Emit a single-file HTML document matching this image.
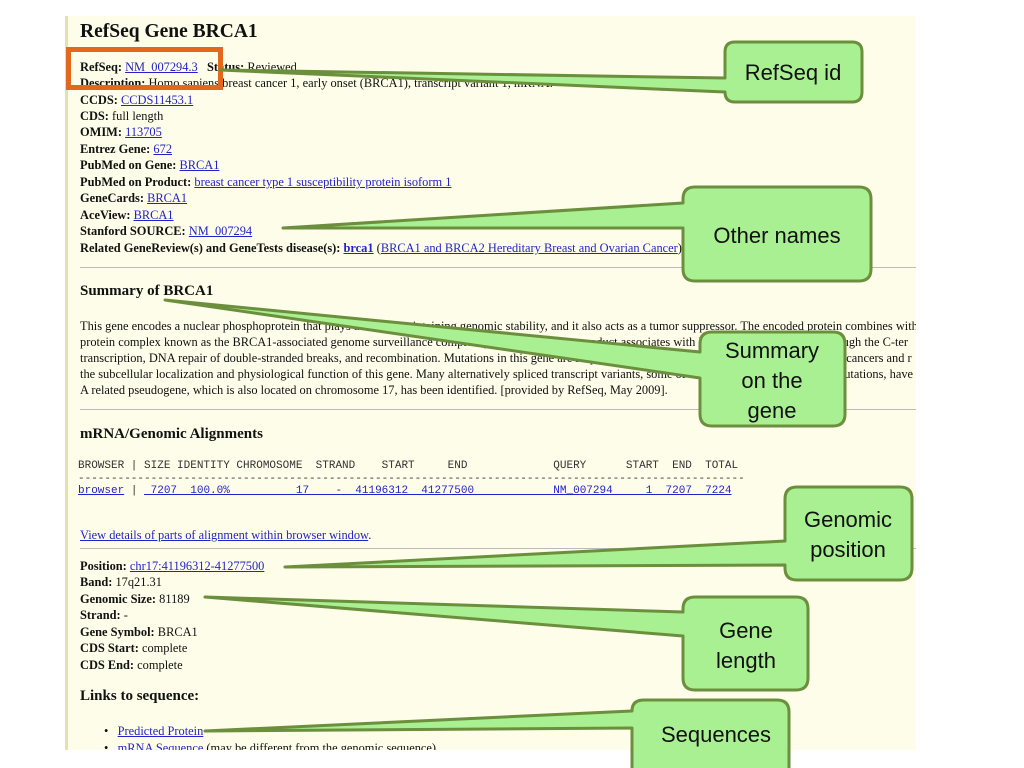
<!DOCTYPE html>
<html><head><meta charset="utf-8"><style>
body{margin:0;width:1024px;height:768px;background:#fff;position:relative;overflow:hidden;font-family:"Liberation Serif",serif;color:#111}
#pg{position:absolute;left:65px;top:16px;width:848px;height:734px;background:#fefde9;border-left:3px solid #e6dfb0;overflow:hidden}
.l{position:absolute;left:12px;font-size:12.4px;white-space:nowrap;line-height:14px}
.l b{font-weight:bold}
a{color:#2323c8;text-decoration:underline}
h1,h2,h3{position:absolute;left:12px;margin:0;white-space:nowrap}
h1{font-size:19.5px;top:5px}
h2{font-size:15px}
hr{position:absolute;left:12px;width:840px;margin:0;border:0;border-top:1px solid #bbb;height:0}
.m{position:absolute;left:10px;font-family:"Liberation Mono",monospace;font-size:11px;white-space:pre;color:#333;line-height:12.5px}
.p{position:absolute;left:12px;top:302px;font-size:12.4px;line-height:16px;white-space:nowrap}
svg{position:absolute;left:0;top:0}
.c{font-family:"Liberation Sans","DejaVu Sans",sans-serif;font-size:22px;fill:#111}
</style></head><body>
<div id="pg">
<h1>RefSeq Gene BRCA1</h1>
<div class="l" style="top:44px"><b>RefSeq:</b> <a>NM_007294.3</a> &nbsp; <b>Status:</b> Reviewed</div>
<div class="l" style="top:60px"><b>Description:</b> Homo sapiens breast cancer 1, early onset (BRCA1), transcript variant 1, mRNA.</div>
<div class="l" style="top:77px"><b>CCDS:</b> <a>CCDS11453.1</a></div>
<div class="l" style="top:93px"><b>CDS:</b> full length</div>
<div class="l" style="top:109px"><b>OMIM:</b> <a>113705</a></div>
<div class="l" style="top:126px"><b>Entrez Gene:</b> <a>672</a></div>
<div class="l" style="top:142px"><b>PubMed on Gene:</b> <a>BRCA1</a></div>
<div class="l" style="top:159px"><b>PubMed on Product:</b> <a>breast cancer type 1 susceptibility protein isoform 1</a></div>
<div class="l" style="top:175px"><b>GeneCards:</b> <a>BRCA1</a></div>
<div class="l" style="top:192px"><b>AceView:</b> <a>BRCA1</a></div>
<div class="l" style="top:208px"><b>Stanford SOURCE:</b> <a>NM_007294</a></div>
<div class="l" style="top:225px"><b>Related GeneReview(s) and GeneTests disease(s):</b> <a><b>brca1</b></a> (<a>BRCA1 and BRCA2 Hereditary Breast and Ovarian Cancer</a>)</div>
<hr style="top:251px">
<h2 style="top:267px">Summary of BRCA1</h2>
<div class="p">This gene encodes a nuclear phosphoprotein that plays a role in maintaining genomic stability, and it also acts as a tumor suppressor. The encoded protein combines with<br>protein complex known as the BRCA1-associated genome surveillance complex (BASC). This gene product associates with RNA polymerase II, and through the C-ter<br>transcription, DNA repair of double-stranded breaks, and recombination. Mutations in this gene are responsible for approximately 40% of inherited breast cancers and r<br>the subcellular localization and physiological function of this gene. Many alternatively spliced transcript variants, some of which are disease-associated mutations, have be<br>A related pseudogene, which is also located on chromosome 17, has been identified. [provided by RefSeq, May 2009].</div>
<hr style="top:393px">
<h2 style="top:410px">mRNA/Genomic Alignments</h2>
<div class="m" style="top:444px">BROWSER | SIZE IDENTITY CHROMOSOME  STRAND    START     END             QUERY      START  END  TOTAL
-----------------------------------------------------------------------------------------------------
<a>browser</a> | <a> 7207  100.0%          17    -  41196312  41277500            NM_007294     1  7207  7224</a></div>
<div class="l" style="top:512px"><a>View details of parts of alignment within browser window</a>.</div>
<hr style="top:532px">
<div class="l" style="top:543px"><b>Position:</b> <a>chr17:41196312-41277500</a></div>
<div class="l" style="top:559px"><b>Band:</b> 17q21.31</div>
<div class="l" style="top:576px"><b>Genomic Size:</b> 81189</div>
<div class="l" style="top:592px"><b>Strand:</b> -</div>
<div class="l" style="top:609px"><b>Gene Symbol:</b> BRCA1</div>
<div class="l" style="top:625px"><b>CDS Start:</b> complete</div>
<div class="l" style="top:642px"><b>CDS End:</b> complete</div>
<h2 style="top:672px">Links to sequence:</h2>
<div class="l" style="top:708px;left:36px">•&nbsp;&nbsp; <a>Predicted Protein</a></div>
<div class="l" style="top:725px;left:36px">•&nbsp;&nbsp; <a>mRNA Sequence</a> (may be different from the genomic sequence)</div>
</div>
<svg width="1024" height="768">
<rect x="68.5" y="49.5" width="152" height="38" fill="none" stroke="#e2691c" stroke-width="5"/>
<g fill="#a8f092" stroke="#6b8f3d" stroke-width="3" stroke-linejoin="round">
<path d="M735,42 H852 Q862,42 862,52 V92 Q862,102 852,102 H735 Q725,102 725,92 V92 L220,70 L725,78 V52 Q725,42 735,42 Z"/>
<path d="M695,187 H859 Q871,187 871,199 V269 Q871,281 859,281 H695 Q683,281 683,269 V228 L283,228 L683,203 V199 Q683,187 695,187 Z"/>
<path d="M712,332 H833 Q845,332 845,344 V414 Q845,426 833,426 H712 Q700,426 700,414 V378 L165,300 L700,352 V344 Q700,332 712,332 Z"/>
<path d="M797,487 H900 Q912,487 912,499 V568 Q912,580 900,580 H797 Q785,580 785,568 V565 L285,567 L785,541 V499 Q785,487 797,487 Z"/>
<path d="M695,597 H796 Q808,597 808,609 V678 Q808,690 796,690 H695 Q683,690 683,678 V636 L205,597 L683,612 V609 Q683,597 695,597 Z"/>
<path d="M644,700 H777 Q789,700 789,712 V780 H632 V728 L205,731 L632,711 Q632,700 644,700 Z"/>
</g>
<g class="c" text-anchor="middle">
<text x="793" y="80">RefSeq id</text>
<text x="777" y="243">Other names</text>
<text x="772" y="358">Summary</text>
<text x="772" y="388">on the</text>
<text x="772" y="418">gene</text>
<text x="848" y="527">Genomic</text>
<text x="848" y="557">position</text>
<text x="746" y="638">Gene</text>
<text x="746" y="668">length</text>
<text x="716" y="742">Sequences</text>
</g>
</svg>
</body></html>
